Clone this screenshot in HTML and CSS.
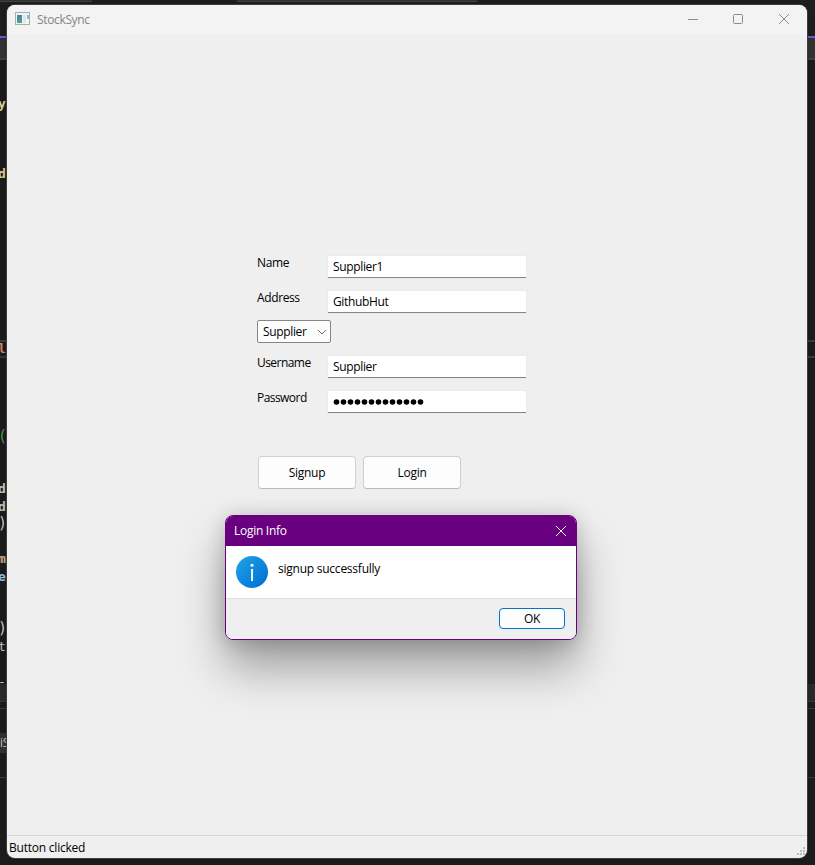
FILE: index.html
```html
<!DOCTYPE html>
<html lang="en">
<head>
<meta charset="utf-8">
<title>StockSync</title>
<link rel="stylesheet" href="styles.css">
</head>
<body>
<div class="editor">
  <div class="tabs"><i></i><i></i></div>
  <div class="crumbs"></div>
  <div class="code">
    <div class="ln yellow">y</div><div class="ln"></div><div class="ln"></div><div class="ln"></div>
    <div class="ln yellow">d</div><div class="ln"></div><div class="ln"></div><div class="ln"></div><div class="ln"></div><div class="ln"></div><div class="ln"></div><div class="ln"></div><div class="ln"></div><div class="ln"></div>
    <div class="ln current">l</div><div class="ln"></div><div class="ln"></div><div class="ln"></div><div class="ln"></div>
    <div class="ln green">(</div><div class="ln"></div><div class="ln"></div>
    <div class="ln">d</div><div class="ln">d</div><div class="ln plain paren">)</div><div class="ln"></div>
    <div class="ln tan">m</div><div class="ln blue">e</div><div class="ln"></div><div class="ln"></div>
    <div class="ln plain paren">)</div><div class="ln plain">t</div><div class="ln"></div><div class="ln plain">-</div>
  </div>
  <div class="band"></div>
  <div class="panel"><div class="chip">iS</div></div>
</div>

<main class="window">
  <header class="titlebar">
    <svg class="appicon" width="16" height="14" viewBox="0 0 16 14">
      <defs><linearGradient id="app" x1="0" y1="0" x2="0" y2="1"><stop offset="0" stop-color="#477fae"/><stop offset="1" stop-color="#50a782"/></linearGradient></defs>
      <rect x=".5" y=".5" width="14" height="12" fill="#f5f5f5" stroke="#a5adb2"/>
      <rect x="2" y="3" width="5" height="8" fill="url(#app)"/>
      <rect x="8" y="3" width="3" height="8" fill="#e2e5e5"/>
      <rect x="12" y="3" width="2" height="4" fill="#93b9c8"/>
    </svg>
    <span class="apptitle">StockSync</span>
    <svg class="controls" width="104" height="12" viewBox="0 0 104 12" fill="none" stroke="#8c8c8c">
      <path d="M1 6.5h10"/>
      <rect x="46.500" y="1.500" width="9" height="9" rx="1"/>
      <path d="M92 1l10 10M102 1L92 11"/>
    </svg>
  </header>
  <form class="form">
    <div class="row"><label>Name</label><div class="field"><span>Supplier1</span></div></div>
    <div class="row address"><label>Address</label><div class="field"><span>GithubHut</span></div></div>
    <div class="combo"><span>Supplier</span>
      <svg width="10" height="6" viewBox="0 0 10 6" fill="none" stroke="#666"><path d="M1 1l4 4 4-4"/></svg>
    </div>
    <div class="row"><label class="tight">Username</label><div class="field"><span>Supplier</span></div></div>
    <div class="row"><label class="tight">Password</label><div class="field">
      <svg class="dots" width="91" height="6" viewBox="0 0 91 6"><defs><pattern id="dots" width="7" height="6" patternUnits="userSpaceOnUse"><circle cx="3.500" cy="3" r="2.800"/></pattern></defs><rect width="91" height="6" fill="url(#dots)"/></svg>
    </div></div>
    <div class="actions"><button type="button">Signup</button><button type="button">Login</button></div>
  </form>
  <footer class="status"><span>Button clicked</span>
    <svg class="grip" width="8" height="8" viewBox="0 0 8 8" fill="#bdbdbd"><path d="M6 0h2v2H6zM3 3h2v2H3zM6 3h2v2H6zM0 6h2v2H0zM3 6h2v2H3zM6 6h2v2H6z"/></svg>
  </footer>
</main>

<section class="dialog">
  <header class="dialog-title"><span>Login Info</span>
    <svg width="12" height="12" viewBox="0 0 12 12" fill="none" stroke="#fff"><path d="M1 1l10 10M11 1L1 11"/></svg>
  </header>
  <div class="dialog-body">
    <svg width="32" height="32" viewBox="0 0 32 32">
      <defs><linearGradient id="info" x1="0" y1="0" x2="1" y2="1"><stop offset=".1" stop-color="#1e9fe5"/><stop offset=".9" stop-color="#0072d3"/></linearGradient></defs>
      <circle cx="16" cy="16" r="16" fill="url(#info)"/>
      <circle cx="16" cy="9.300" r="1.500" fill="#fff"/><rect x="15.100" y="13" width="1.900" height="12" fill="#fff"/>
    </svg>
    <span>signup successfully</span>
  </div>
  <div class="dialog-foot"><button type="button" class="ok">OK</button></div>
</section>
</body>
</html>
```
FILE: styles.css
```css
* { box-sizing: border-box; }
body {
  margin: 0;
  width: 815px;
  height: 865px;
  overflow: hidden;
  position: relative;
  background: #1c1c1c;
  color: #000;
  font: 12px/16px "Open Sans", "Noto Sans", sans-serif;
  letter-spacing: -0.28px;
}
svg { display: block; flex: none; }

.editor { height: 865px; overflow: hidden; }
.tabs {
  height: 38px;
  display: flex;
  gap: 145px;
  background: #1f1f1f;
  border-bottom: 2px solid #6d58d8;
}
.tabs i { width: 92px; height: 2px; background: #323232; border-bottom: 1px solid #454545; }
.tabs i + i { width: 240px; }
.crumbs { height: 22px; background: #333; border-bottom: 2px solid #414141; }
.code {
  height: 624px;
  padding-top: 35px;
  font: bold 13px/17.5px "DejaVu Sans Mono", monospace;
  color: #c8c8c8;
  text-indent: -2px;
  overflow: hidden;
}
.ln { height: 17.5px; }
.yellow { color: #dcd69a; }
.green { color: #4b9c45; font-weight: normal; font-size: 15px; }
.plain { font-weight: normal; }
.paren { font-size: 15px; }
.tan { color: #d0b98c; }
.blue { color: #8cc8ec; }
.current { color: #d98868; box-shadow: inset 0 2px #3c3c3c, inset 0 -2px #3c3c3c; }
.band { height: 18px; background: #2b2b2b; border-bottom: 1px solid #3a3a3a; }
.panel {
  height: 70px;
  margin-top: 6px;
  padding-top: 24px;
  border-top: 1px solid #3a3a3a;
  border-bottom: 1px solid #3a3a3a;
}
.chip { width: 20px; height: 20px; background: #333; color: #c8c8c8; line-height: 20px; }

.window {
  position: absolute;
  left: 7px;
  top: 5px;
  width: 800px;
  height: 853px;
  display: flex;
  flex-direction: column;
  background: #efefef;
  border-radius: 8px;
  box-shadow: 0 0 0 1px #3d3d3d, 0 0 7px 2px rgba(0, 0, 0, .15);
  overflow: hidden;
}
.titlebar {
  height: 30px;
  flex: none;
  display: flex;
  align-items: center;
  background: #f3f3f3;
  padding: 0 16px 2px 8px;
  color: #858585;
}
.apptitle { margin-left: 6px; padding-top: 2px; letter-spacing: -0.35px; }
.controls { margin-left: auto; }

.form { flex: 1; padding: 220px 0 0 250px; }
.row { display: flex; height: 35px; }
.row label { width: 71px; letter-spacing: -0.38px; }
.row .tight { letter-spacing: -0.55px; }
.field {
  width: 198px;
  height: 22px;
  margin-top: 1px;
  display: flex;
  align-items: center;
  padding-left: 5px;
  background: #fff;
  border-bottom: 1px solid #868686;
  box-shadow: 0 0 0 1px #ebebeb;
  letter-spacing: -0.35px;
}
.dots { margin-top: 1px; }
.address { height: 30px; }
.combo {
  display: flex;
  align-items: center;
  justify-content: space-between;
  width: 74px;
  height: 23px;
  margin-bottom: 12px;
  padding: 0 3px 0 5px;
  border: 1px solid #868686;
  border-radius: 2px;
  background: #fdfdfd;
  letter-spacing: -0.35px;
}
.actions { display: flex; gap: 7px; margin: 31px 0 0 1px; }
button {
  width: 98px;
  height: 33px;
  padding: 0;
  border: 1px solid #d0d0d0;
  border-bottom-color: #bababa;
  border-radius: 4px;
  background: #fdfdfd;
  color: #000;
  font: inherit;
  letter-spacing: inherit;
}
.status {
  height: 23px;
  flex: none;
  display: flex;
  align-items: center;
  justify-content: space-between;
  border-top: 1px solid #d7d7d7;
  padding: 2px 2px 0;
  letter-spacing: -0.22px;
}
.grip { margin-top: 6px; }

.dialog {
  position: absolute;
  left: 225px;
  top: 515px;
  width: 352px;
  height: 125px;
  overflow: hidden;
  border: 1px solid #68007f;
  border-radius: 8px;
  background: #fff;
  box-shadow: 0 28px 46px rgba(0, 0, 0, .34), 0 2px 20px rgba(0, 0, 0, .18);
}
.dialog-title {
  height: 30px;
  display: flex;
  align-items: center;
  justify-content: space-between;
  padding: 0 9px 0 8px;
  background: #68007f;
  color: #fff;
}
.dialog-body { height: 52px; display: flex; gap: 10px; padding: 10px; }
.dialog-body span { padding-top: 5px; letter-spacing: -0.24px; }
.dialog-foot {
  display: flex;
  justify-content: flex-end;
  height: 41px;
  padding: 9px 11px 0;
  background: #efefef;
  border-top: 1px solid #dfdfdf;
}
.ok { width: 66px; height: 21px; border-color: #0074cc; }
```
